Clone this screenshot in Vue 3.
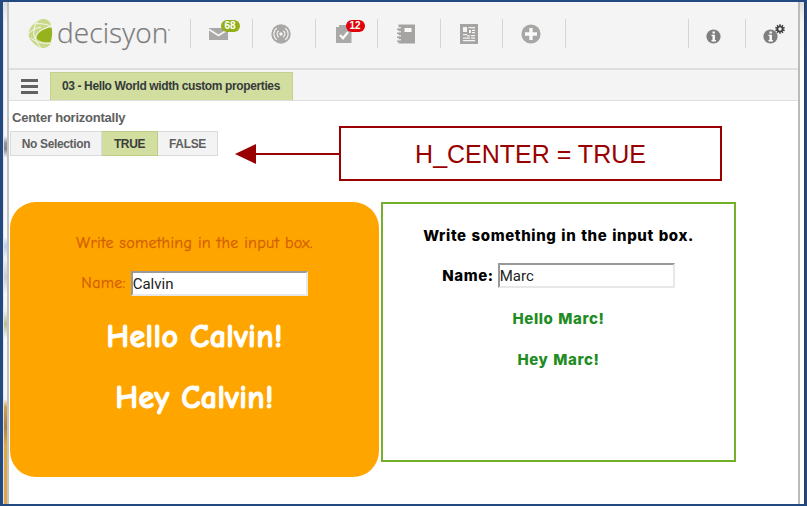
<script setup>
import { ref } from 'vue'

const options = ['No Selection', 'TRUE', 'FALSE']
const selected = ref('TRUE')
const first = ref('Calvin')
const second = ref('Marc')
</script>

<template>
  <div class="frame">
    <div class="edge edge-left"></div>
    <main class="app">
      <header class="top">
        <div class="brand">
          <svg class="mark" width="25" height="32" viewBox="0 0 25 32">
            <path d="M14 2C19 1.500 22 4 23 8C24 14 24 21 22.500 27C20 31 14 32.500 9 29C4 25.500 .5 21 .5 17C1 10 7 4 14 2Z" fill="#c9d98a" />
            <path d="M23.500 10.500C17 11 10 15 8.600 20C8.800 24 17 26 22.500 25C24.500 19 24.500 14 23.500 10.500Z" fill="#96b21d" />
            <path d="M24 9.300C15 11 8.500 15 7.600 20C7.700 24 10 28 14 32M3 21C8 25.500 15 27 24 26M10 3C6 9 4.500 15 7 22M5.500 7C12 6 19 7 24 10M0 17C4 13 8 11 13 10" fill="none" stroke="#f7f8f2" stroke-width="1" />
          </svg>
          <span class="word">decisyon</span><i class="dot"></i>
        </div>
        <nav class="tools">
          <div class="tool">
            <svg width="20" height="14" viewBox="0 0 20 14"><path d="M0 1h19v12H0z" fill="#aaa9a7" /><path d="M0 2.500L9.500 8.500L19 2.500" fill="none" stroke="#f4f4f4" stroke-width="1.900" /></svg>
            <span class="badge green">68</span>
          </div>
          <div class="tool">
            <svg width="20" height="20" viewBox="0 0 20 20"><circle cx="10" cy="10" r="9.700" fill="#a9a8a6" /><circle cx="10" cy="10" r="1.700" fill="#f4f4f4" /><path d="M7.700 6.800a4 4 0 0 0 0 6.400M12.300 6.800a4 4 0 0 1 0 6.400M5.800 4.300a7 7 0 0 0 0 11.400M14.200 4.300a7 7 0 0 1 0 11.400" fill="none" stroke="#f4f4f4" stroke-width="1.100" /></svg>
          </div>
          <div class="tool">
            <svg width="16" height="19" viewBox="0 0 16 19"><path d="M0 3h3V1h10v2h2.500v16H0z" fill="#aaa9a7" /><path d="M4 11l3 3.200L12 8" fill="none" stroke="#fafafa" stroke-width="2.300" /></svg>
            <span class="badge red">12</span>
          </div>
          <div class="tool">
            <svg width="18" height="20" viewBox="0 0 18 20"><path d="M1.500 .5H18v19H1.500z" fill="#a5a4a2" /><path d="M0 4h4M0 8h4M0 12h4M0 16h4" stroke="#f4f4f4" stroke-width="1.500" /><path d="M0 5.300h4M0 9.300h4M0 13.300h4M0 17.300h4" stroke="#a5a4a2" stroke-width="1.500" /><path d="M7.500 4h7v4h-7z" fill="#fafafa" /></svg>
          </div>
          <div class="tool">
            <svg width="18" height="20" viewBox="0 0 18 20"><path d="M0 0h18v20H0z" fill="#a5a4a2" /><path d="M3 3h4v5H3zM8.500 3H15v1.200H8.500zM9 6H11v3H9zM12 5.800h3v1.200h-3zM12 8h3v1.200h-3zM3 10h4v1.200H3zM7 11.300h3v1.200H7zM11 11h4v1.200h-4zM3 13.500h7v1.200H3zM11 13.500h4v1.200h-4zM3 16h12v1.300H3z" fill="#f4f4f4" /></svg>
          </div>
          <div class="tool">
            <svg width="20" height="20" viewBox="0 0 20 20"><circle cx="10" cy="10" r="9.600" fill="#a7a6a4" /><path d="M10 4v12M4 10h12" stroke="#fafafa" stroke-width="3.300" /></svg>
          </div>
        </nav>
        <div class="info">
          <div class="info-item">
            <svg width="15" height="15" viewBox="0 0 15 15"><circle cx="7.500" cy="7.500" r="7.100" fill="#7f7f7f" /><path d="M6.500 2.500h2.400v2H6.500zM5.500 5.700h3.400v5.300h1v1.400H5.500V11h1V7h-1z" fill="#fff" /></svg>
          </div>
          <div class="info-item">
            <svg width="15" height="15" viewBox="0 0 15 15"><circle cx="7.500" cy="7.500" r="7.100" fill="#7f7f7f" /><path d="M6.500 2.500h2.400v2H6.500zM5.500 5.700h3.400v5.300h1v1.400H5.500V11h1V7h-1z" fill="#fff" /></svg>
            <svg class="gear" width="10" height="10" viewBox="-5 -5 10 10"><path d="M0-4.800V4.800M-4.600-1.500L4.600 1.500M-2.900 3.900L2.900-3.900M-2.900-3.900L2.900 3.900M-4.600 1.500L4.600-1.500" stroke="#3f3f3f" stroke-width="1.500" /><circle r="2.500" fill="#f4f4f4" stroke="#3f3f3f" stroke-width="1.600" /></svg>
          </div>
        </div>
      </header>
      <div class="tabs">
        <button class="menu"><i></i><i></i><i></i></button>
        <div class="tab"><span>03 - Hello World width custom properties</span></div>
      </div>
      <section class="selector">
        <div class="caption"><span>Center horizontally</span></div>
        <div class="options">
          <button v-for="o in options" :key="o" class="option" :class="{ on: o === selected }" @click="selected = o">{{ o }}</button>
        </div>
      </section>
      <section class="cards">
        <div class="card orange">
          <p class="prompt">Write something in the input box.</p>
          <div class="field"><label>Name:</label><input v-model="first" /></div>
          <p class="hello">Hello {{ first }}!</p>
          <p class="hey">Hey {{ first }}!</p>
        </div>
        <div class="card outline">
          <p class="prompt">Write something in the input box.</p>
          <div class="field"><label>Name:</label><input v-model="second" /></div>
          <p class="hello">Hello {{ second }}!</p>
          <p class="hey">Hey {{ second }}!</p>
        </div>
      </section>
    </main>
    <div class="edge edge-right"></div>
    <div class="callout">
      <svg width="104" height="22" viewBox="0 0 104 22"><path d="M0 11L21 1v20z" fill="#990000" /><path d="M20 11h84" stroke="#990000" stroke-width="1.900" /></svg>
      <div class="note"><span>H_CENTER = TRUE</span></div>
    </div>
  </div>
</template>

<style>
body { margin: 0; background: #fff; overflow: hidden; }
</style>

<style scoped>
* { box-sizing: border-box; }
p { margin: 0; white-space: nowrap; }
svg { display: block; flex: none; }
button { font: inherit; margin: 0; padding: 0; border: 0; }
.frame { position: relative; display: flex; width: 807px; height: 506px; border: 2px solid #234a80; border-left-width: 3px; font-family: "Liberation Sans", Arial, sans-serif; background: #fff; }
.edge-left { width: 6px; border-right: 2px solid #c3c3c5; box-shadow: inset 1px 0 #e4e4e8; background: linear-gradient(#d9dde1 0, #fafafa 22px, #fafafa 134px, #96979a 141px, #85878b 147px, #fafafa 156px, #fafafa 235px, #b9cfe8 244px, #f4f4f4 256px, #ccc 275px, #fafafa 292px, #f5f5ef 308px, #b9bd92 322px, #fafafa 337px, #f5f5f5 397px, #d3a148 405px, #ad8244 425px, #dfa83f 443px, #dfa548 100%); }
.edge-right { width: 7px; border-left: 2px solid #bbb; border-right: 1px solid #303c4c; background: linear-gradient(#dedede 0, #f5f5f5 20px, #fff 60px); }
.app { flex: 1; min-width: 0; display: flex; flex-direction: column; }
.top { display: flex; height: 68px; background: #f4f4f4; border-bottom: 2px solid #dfdfdf; }
.brand { width: 180.5px; padding: 15px 0 0 19px; display: flex; }
.word { margin: -3px 0 0 4px; height: 35px; font: 300 28px/37px "Open Sans", sans-serif; letter-spacing: .1px; color: #7c7c7c; -webkit-text-stroke: .25px #7c7c7c; }
.dot { width: 2px; height: 2px; margin: 12px 0 0 0; background: #aaa; border-radius: 50%; }
.tools { display: flex; height: 29px; margin-top: 17px; border-right: 1px solid #d5d5d5; }
.tool { position: relative; width: 62.5px; display: flex; align-items: center; justify-content: center; padding-right: 5px; border-left: 1px solid #d5d5d5; }
.badge { position: absolute; top: 1px; left: 30px; width: 19px; height: 12px; border-radius: 6px; color: #fff; font: bold 10px/12px "Liberation Sans", sans-serif; text-align: center; }
.green { background: #93af1c; }
.red { background: #df0008; }
.info { display: flex; margin: 17px 0 0 auto; height: 29px; }
.info-item { position: relative; width: 57.5px; border-left: 1px solid #d5d5d5; padding: 10px 0 0 17px; }
.info-item:last-child { width: 53px; }
.gear { position: absolute; top: 5px; left: 29px; }
.tabs { display: flex; height: 31px; padding-top: 2px; border-bottom: 1px solid #dfdfdf; background: #f4f4f4; }
.menu { width: 41px; padding: 7px 0 0 12px; display: flex; flex-direction: column; gap: 3px; background: none; }
.menu i { width: 17px; height: 3px; background: #626262; }
.tab { width: 243px; padding-left: 11px; border: 1px solid #c5d08f; border-bottom: 0; background: #d2dda0; color: #353b3b; font-weight: bold; font-size: 12px; line-height: 26px; white-space: nowrap; letter-spacing: -.38px; }
.selector { height: 101px; padding: 8px 0 0 1px; font-weight: bold; color: #606060; }
.caption { height: 22px; padding-left: 2px; font-size: 13px; line-height: 17px; letter-spacing: -.23px; }
.options { display: flex; height: 25px; }
.option { height: 25px; width: 60px; border: 1px solid #dadada; border-left: 0; background: #f3f3f3; color: #606060; font-size: 12px; line-height: 22px; white-space: nowrap; letter-spacing: -.36px; }
.option:first-child { width: 92px; border-left: 1px solid #dadada; }
.option.on { width: 56px; background: #d2dda0; border-color: #bccd87; color: #393f38; }
.cards { display: flex; gap: 2px; align-items: flex-start; padding-left: 1px; }
.card { display: flex; flex-direction: column; align-items: center; }
.field { display: flex; }
input { width: 177px; height: 25px; padding: 0; border: 2px solid; border-color: #999 #e8e8e8 #e8e8e8 #999; background: #fff; color: #222; font: 15px/20px Roboto, sans-serif; }
.orange { width: 369px; height: 275px; padding-top: 30px; border-radius: 26px; background: #ffa500; color: #d26000; font-family: "Comic Sans MS", "Comic Neue", "Open Sans", cursive; font-size: 16px; }
.orange .prompt, .orange label { letter-spacing: .28px; -webkit-text-stroke: .3px #d26000; }
.orange .prompt { height: 39px; line-height: 23px; }
.orange .field { height: 43px; line-height: 24px; gap: 5px; }
.orange .hello, .orange .hey { color: #fff; font-size: 32px; font-weight: bold; height: 61px; line-height: 46px; letter-spacing: .35px; -webkit-text-stroke: 1px #fff; }
.outline { width: 355px; height: 260px; padding-top: 20px; border: 2px solid #76af2c; color: #000; font-family: Inter, "Liberation Sans", sans-serif; font-weight: 800; font-size: 15px; letter-spacing: .6px; word-spacing: 1px; }
.outline .prompt { height: 39px; line-height: 23px; }
.outline .field { height: 44px; line-height: 25px; gap: 4px; }
.outline .hello, .outline .hey { height: 41px; line-height: 23px; color: #218c21; }
.callout { position: absolute; left: 232px; top: 124px; display: flex; align-items: center; }
.note { width: 383px; height: 55px; border: 2px solid #990000; color: #990000; font-size: 25px; line-height: 53px; text-align: center; white-space: nowrap; background: #fff; }
</style>
